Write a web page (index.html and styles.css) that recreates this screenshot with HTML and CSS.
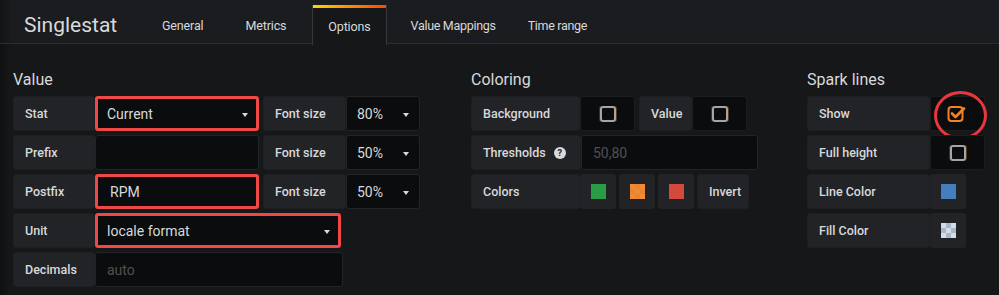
FILE: index.html
```html
<!DOCTYPE html>
<html>
<head>
<meta charset="utf-8">
<link rel="stylesheet" href="styles.css">
</head>
<body>
<header class="header">
  <div class="title">Singlestat</div>
  <nav class="tabs">
    <div class="tab">General</div>
    <div class="tab">Metrics</div>
    <div class="tab active">Options</div>
    <div class="tab tab-tight">Value Mappings</div>
    <div class="tab tab-tight">Time range</div>
  </nav>
</header>
<main class="content">
  <section class="section sec-value">
    <h5 class="heading">Value</h5>
    <div class="row">
      <span class="label lbl-v">Stat</span>
      <div class="input select inp-main marked">Current<i class="caret"></i></div>
      <span class="label lbl-fs">Font size</span>
      <div class="input select sel-fs">80%<i class="caret"></i></div>
    </div>
    <div class="row">
      <span class="label lbl-v">Prefix</span>
      <div class="input inp-main"></div>
      <span class="label lbl-fs">Font size</span>
      <div class="input select sel-fs">50%<i class="caret"></i></div>
    </div>
    <div class="row">
      <span class="label lbl-v">Postfix</span>
      <div class="input inp-main marked postfix">RPM</div>
      <span class="label lbl-fs">Font size</span>
      <div class="input select sel-fs">50%<i class="caret"></i></div>
    </div>
    <div class="row">
      <span class="label lbl-v">Unit</span>
      <div class="input select inp-unit marked">locale format<i class="caret"></i></div>
    </div>
    <div class="row">
      <span class="label lbl-v">Decimals</span>
      <div class="input inp-dec placeholder">auto</div>
    </div>
  </section>

  <section class="section sec-color">
    <h5 class="heading">Coloring</h5>
    <div class="row">
      <span class="label lbl-c">Background</span>
      <div class="check-cell"><span class="checkbox"></span></div>
      <span class="label lbl-val">Value</span>
      <div class="check-cell"><span class="checkbox"></span></div>
    </div>
    <div class="row">
      <span class="label lbl-th">Thresholds <span class="help">?</span></span>
      <div class="input inp-th placeholder">50,80</div>
    </div>
    <div class="row">
      <span class="label lbl-c">Colors</span>
      <div class="swatch-cell first"><span class="swatch green"></span></div>
      <div class="swatch-cell"><span class="swatch orange"></span></div>
      <div class="swatch-cell"><span class="swatch red"></span></div>
      <span class="label lbl-inv">Invert</span>
    </div>
  </section>

  <section class="section sec-spark">
    <h5 class="heading">Spark lines</h5>
    <div class="row">
      <span class="label lbl-s">Show</span>
      <div class="check-cell circled">
        <svg class="checked" width="20" height="20" viewBox="0 0 20 20">
          <rect x="1.5" y="4" width="14" height="14" rx="3" fill="none" stroke="#f5821f" stroke-width="2"/>
          <path d="M5 10.5 L8.5 14 L17 5.5" fill="none" stroke="#f5821f" stroke-width="2.6" stroke-linecap="round" stroke-linejoin="round"/>
        </svg>
      </div>
    </div>
    <div class="row">
      <span class="label lbl-s">Full height</span>
      <div class="check-cell"><span class="checkbox"></span></div>
    </div>
    <div class="row">
      <span class="label lbl-s">Line Color</span>
      <div class="swatch-cell first"><span class="swatch blue"></span></div>
    </div>
    <div class="row">
      <span class="label lbl-s">Fill Color</span>
      <div class="swatch-cell first"><span class="swatch checker"></span></div>
    </div>
  </section>
</main>
</body>
</html>
```

FILE: styles.css
```css
* { box-sizing: border-box; }

html, body {
  margin: 0;
  padding: 0;
}

body {
  width: 999px;
  height: 295px;
  overflow: hidden;
  background: linear-gradient(to right, #0f1011 0px, #161719 10px);
  font-family: Roboto, "Noto Sans", sans-serif;
  color: #d8d9da;
}

/* ---------- header ---------- */
.header {
  display: flex;
  height: 44px;
  border-bottom: 1px solid #2c2d30;
  background: linear-gradient(to right, #121315 0px, #1b1c1f 12px);
}

.title {
  width: 146px;
  padding-left: 24px;
  margin-top: 5px;
  height: 39px;
  display: flex;
  align-items: center;
  font-size: 21px;
  color: #d8d9da;
}

.tabs {
  display: flex;
  gap: 10px;
}

.tab {
  margin-top: 5px;
  height: 39px;
  padding: 0 15px;
  display: flex;
  align-items: center;
  font-size: 12.5px;
  letter-spacing: -0.15px;
  color: #d8d9da;
  border: 1px solid transparent;
  border-bottom: none;
  white-space: nowrap;
}

.tab-tight {
  letter-spacing: -0.3px;
  padding: 0 7px 0 13px;
}

.tab.active {
  height: 40px;
  margin-bottom: -1px;
  background: #161719;
  border-top: 3px solid transparent;
  border-image: linear-gradient(to right, #ffd500 0%, #ff4400 100%) 3 0 0 0;
  position: relative;
}

.tab.active::before,
.tab.active::after {
  content: "";
  position: absolute;
  top: -3px;
  bottom: 0;
  width: 1px;
  background: #37383b;
}
.tab.active::before { left: -1px; }
.tab.active::after { right: -1px; }

/* ---------- content ---------- */
.content {
  display: flex;
  padding: 26px 0 0 13px;
}

.section { display: flex; flex-direction: column; }
.sec-value { width: 458px; }
.sec-color { width: 336px; }
.sec-spark { width: 190px; }

.heading {
  margin: 0 0 6px 0;
  font-size: 16px;
  line-height: 20px;
  font-weight: 400;
  color: #d8d9da;
}

.row {
  display: flex;
  height: 35px;
  margin-bottom: 4px;
}

.label {
  display: flex;
  align-items: center;
  padding-left: 11px;
  background: #222326;
  border: 1px solid #1e1f22;
  border-radius: 3px;
  font-size: 12.5px;
  font-weight: 500;
  color: #d8d9da;
  white-space: nowrap;
}

.lbl-v { width: 82px; }
.lbl-fs { width: 83px; margin-left: 4px; }
.lbl-c { width: 109px; }
.lbl-val { width: 53px; margin-left: 4px; }
.lbl-th { width: 110px; }
.lbl-inv { width: 52px; margin-left: 3px; }
.lbl-s { width: 123px; }

.input {
  position: relative;
  display: flex;
  align-items: center;
  padding-left: 11px;
  background: #0b0c0e;
  border: 1px solid #232427;
  border-radius: 3px;
  font-size: 14px;
  color: #d8d9da;
}

.inp-main { width: 164px; }
.sel-fs { width: 74px; padding-left: 10px; }
.inp-unit { width: 246px; }
.inp-dec { width: 248px; }
.inp-th { width: 177px; }
.postfix { padding-left: 14px; }

.placeholder { color: #4f5053; }

.caret {
  position: absolute;
  right: 10px;
  top: 16px;
  width: 0;
  height: 0;
  border-left: 3.5px solid transparent;
  border-right: 3.5px solid transparent;
  border-top: 4px solid #d8d9da;
}

.marked {
  border: 3px solid #f04747;
  padding-left: 9px;
}
.marked.postfix { padding-left: 12px; }
.marked .caret { right: 8px; top: 14px; }

.help {
  display: inline-flex;
  align-items: center;
  justify-content: center;
  width: 12px;
  height: 12px;
  margin-left: 8px;
  border-radius: 50%;
  background: #d8d9da;
  color: #222326;
  font-size: 9px;
  font-weight: 700;
}

.check-cell {
  position: relative;
  width: 55px;
  display: flex;
  align-items: center;
  justify-content: center;
  background: #0b0c0e;
  border: 1px solid #1c1d20;
  border-radius: 3px;
}

.checkbox {
  width: 16px;
  height: 16px;
  border: 2px solid #a5a6a9;
  border-radius: 3px;
  box-shadow: -1px 0 0 rgba(80, 140, 220, 0.35), 1px 0 0 rgba(240, 150, 60, 0.35);
}

.checked { display: block; margin-left: -2px; margin-top: -2px; }

.circled::after {
  content: "";
  position: absolute;
  left: 3px;
  top: -6px;
  width: 47px;
  height: 43px;
  border: 3px solid #e8383d;
  border-radius: 50%;
}

.swatch-cell {
  width: 36px;
  margin-left: 3px;
  display: flex;
  align-items: center;
  justify-content: center;
  background: #222326;
  border-radius: 3px;
}
.swatch-cell.first { margin-left: 0; }

.swatch { width: 15px; height: 15px; display: block; }
.green { background: #299c46; }
.red { background: #d44a3a; }
.blue { background: #447ebc; }
.orange {
  background-color: #ef8a35;
  background-image:
    linear-gradient(45deg, #e9842f 25%, transparent 25%, transparent 75%, #e9842f 75%),
    linear-gradient(45deg, #e9842f 25%, transparent 25%, transparent 75%, #e9842f 75%);
  background-size: 10px 10px;
  background-position: 0 0, 5px 5px;
}
.checker {
  background-color: #d3dee9;
  background-image:
    linear-gradient(45deg, #a9b8c8 25%, transparent 25%, transparent 75%, #a9b8c8 75%),
    linear-gradient(45deg, #a9b8c8 25%, transparent 25%, transparent 75%, #a9b8c8 75%);
  background-size: 10px 10px;
  background-position: 0 0, 5px 5px;
}
```
